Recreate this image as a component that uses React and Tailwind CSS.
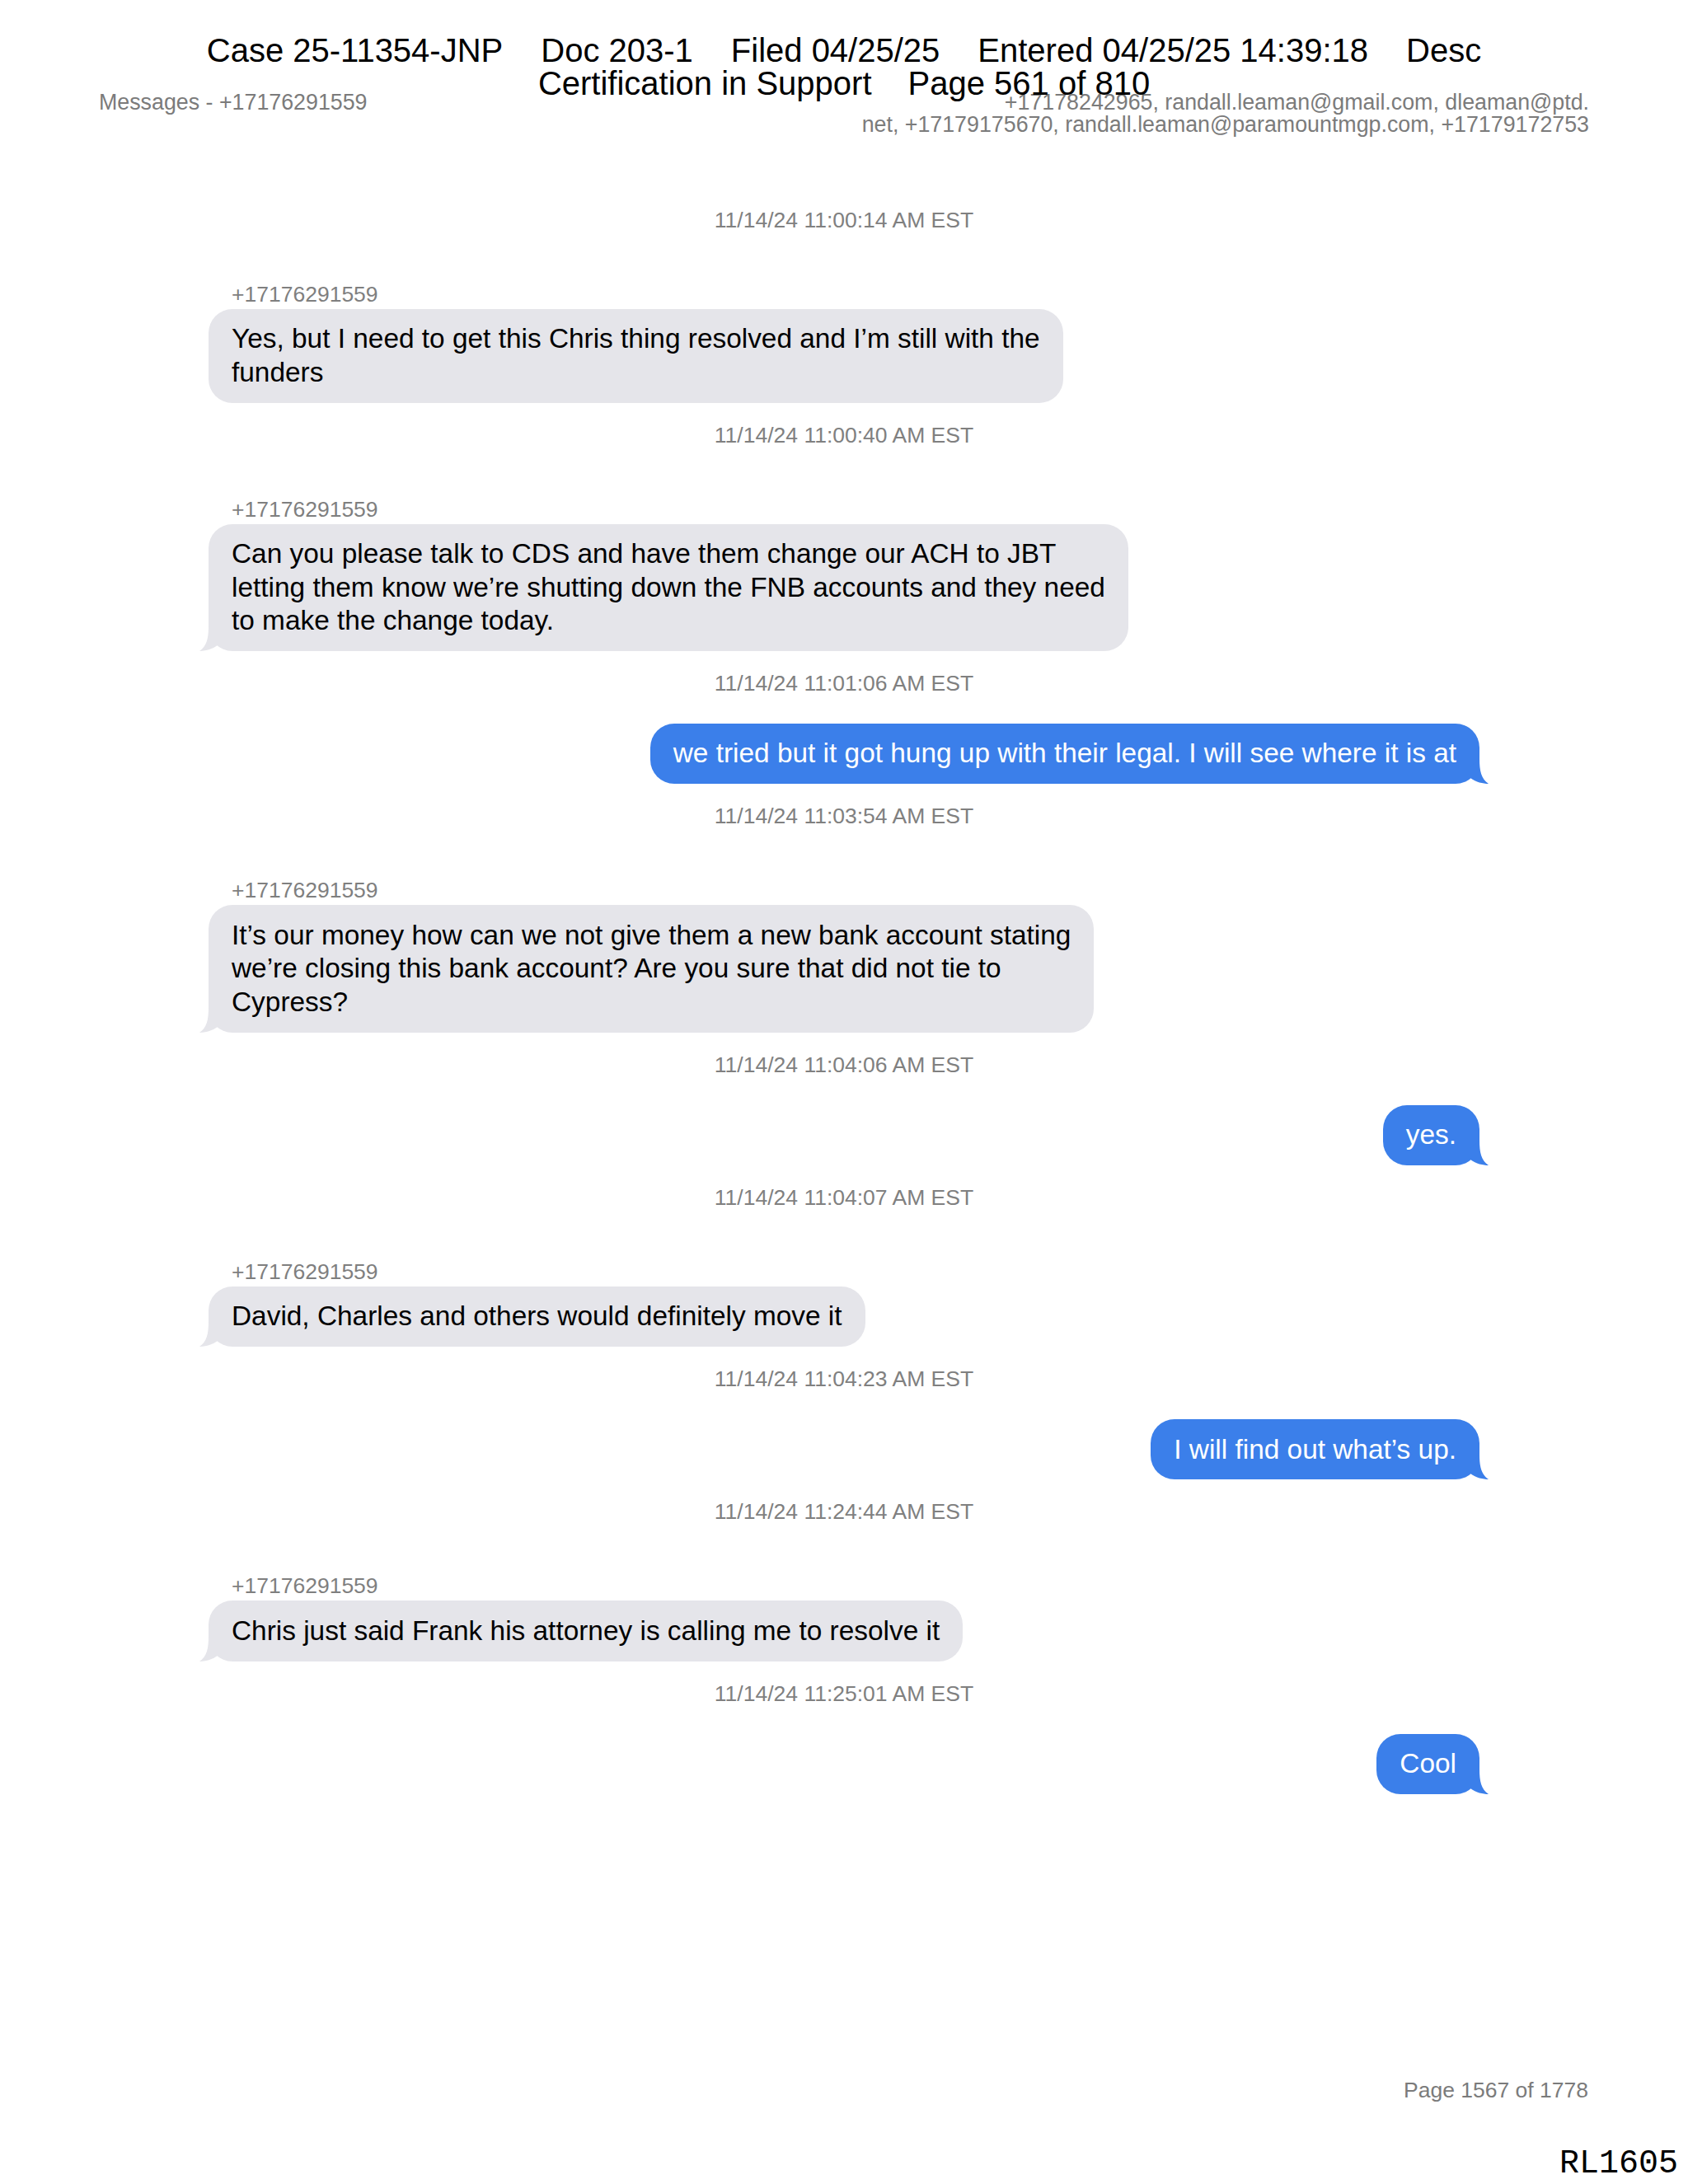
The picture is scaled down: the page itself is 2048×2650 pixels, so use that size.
import React from "react";

const GREY = "#e5e5ea";
const BLUE = "#3b7fea";

function TailRight() {
  return (
    <svg className="absolute bottom-0 right-[-12px]" width="30" height="30" viewBox="0 0 30 30">
      <path d="M18 0 C18 14 20 24 29 30 C22 30 14 28 7 23 L6 10 Z" fill={BLUE} />
    </svg>
  );
}

function TailLeft() {
  return (
    <svg className="absolute bottom-0 left-[-12px]" width="30" height="30" viewBox="0 0 30 30">
      <path d="M12 0 C12 14 10 24 1 30 C8 30 16 28 23 23 L24 10 Z" fill={GREY} />
    </svg>
  );
}

function Ts({ children, className = "" }) {
  return (
    <div className={"text-center text-[26.5px] leading-[30px] text-[#808080] " + className}>{children}</div>
  );
}

function Lines({ lines }) {
  return (
    <span className="relative flex flex-col whitespace-nowrap">
      {lines.map((l, i) => (
        <span key={i}>{l}</span>
      ))}
    </span>
  );
}

function Incoming({ lines, tail = true }) {
  return (
    <div className="mt-[60px] flex flex-col items-start">
      <div className="pl-[28px] text-[26.5px] leading-[30px] text-[#7f7f7f]">+17176291559</div>
      <div className="relative mt-[3px] rounded-[29px] bg-[#e5e5ea] px-[28px] py-[16.4px] text-[33.4px] leading-[40.5px] text-black">
        {tail && <TailLeft />}
        <Lines lines={lines} />
      </div>
    </div>
  );
}

function Outgoing({ lines }) {
  return (
    <div className="mt-[34px] flex justify-end">
      <div className="relative rounded-[29px] bg-[#3b7fea] px-[28px] py-[16.4px] text-[33.4px] leading-[40.5px] text-white">
        <TailRight />
        <Lines lines={lines} />
      </div>
    </div>
  );
}

export default function App() {
  return (
    <div className="relative flex h-[2650px] w-[2048px] flex-col bg-white font-['Liberation_Sans',Arial,sans-serif]">
      {/* court stamp overlay */}
      <div className="absolute left-0 right-0 top-[41px] text-[40px] leading-[40px] text-black">
        <div className="flex justify-center gap-[46px] whitespace-nowrap">
          <span>Case 25-11354-JNP</span>
          <span>Doc 203-1</span>
          <span>Filed 04/25/25</span>
          <span>Entered 04/25/25 14:39:18</span>
          <span>Desc</span>
        </div>
        <div className="flex justify-center gap-[44px] whitespace-nowrap">
          <span>Certification in Support</span>
          <span>Page 561 of 810</span>
        </div>
      </div>

      <div className="flex justify-between px-[120px] pt-[111px] text-[26.8px] leading-[27px] text-[#7b7b7b]">
        <div>Messages - +17176291559</div>
        <div className="text-right">
          <div>+17178242965, randall.leaman@gmail.com, dleaman@ptd.</div>
          <div>net, +17179175670, randall.leaman@paramountmgp.com, +17179172753</div>
        </div>
      </div>

      <div className="mt-[87px] flex flex-col px-[253px]">
        <Ts>11/14/24 11:00:14 AM EST</Ts>
        <Incoming
          tail={false}
          lines={["Yes, but I need to get this Chris thing resolved and I’m still with the", "funders"]}
        />
        <Ts className="mt-[24px]">11/14/24 11:00:40 AM EST</Ts>
        <Incoming
          lines={[
            "Can you please talk to CDS and have them change our ACH to JBT",
            "letting them know we’re shutting down the FNB accounts and they need",
            "to make the change today.",
          ]}
        />
        <Ts className="mt-[24px]">11/14/24 11:01:06 AM EST</Ts>
        <Outgoing lines={["we tried but it got hung up with their legal. I will see where it is at"]} />
        <Ts className="mt-[24px]">11/14/24 11:03:54 AM EST</Ts>
        <Incoming
          lines={[
            "It’s our money how can we not give them a new bank account stating",
            "we’re closing this bank account? Are you sure that did not tie to",
            "Cypress?",
          ]}
        />
        <Ts className="mt-[24px]">11/14/24 11:04:06 AM EST</Ts>
        <Outgoing lines={["yes."]} />
        <Ts className="mt-[24px]">11/14/24 11:04:07 AM EST</Ts>
        <Incoming lines={["David, Charles and others would definitely move it"]} />
        <Ts className="mt-[24px]">11/14/24 11:04:23 AM EST</Ts>
        <Outgoing lines={["I will find out what’s up."]} />
        <Ts className="mt-[24px]">11/14/24 11:24:44 AM EST</Ts>
        <Incoming lines={["Chris just said Frank his attorney is calling me to resolve it"]} />
        <Ts className="mt-[24px]">11/14/24 11:25:01 AM EST</Ts>
        <Outgoing lines={["Cool"]} />
      </div>

      <div className="mt-auto flex flex-col items-end pb-[4px]">
        <div className="pr-[121px] text-[26.5px] leading-[30px] text-[#7b7b7b]">Page 1567 of 1778</div>
        <div className="mt-[55px] pr-[12px] font-['Liberation_Mono','Courier_New',monospace] text-[40px] leading-[40px] text-black">RL1605</div>
      </div>
    </div>
  );
}
